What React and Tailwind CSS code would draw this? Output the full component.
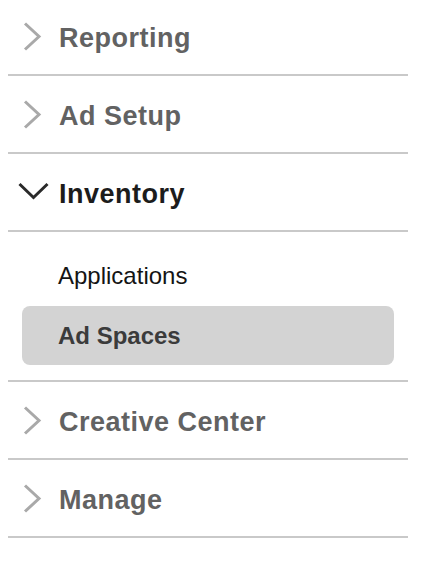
const sections = [
  { label: "Reporting" },
  { label: "Ad Setup" },
  { label: "Inventory", open: true, items: ["Applications", "Ad Spaces"], active: "Ad Spaces" },
  { label: "Creative Center" },
  { label: "Manage" },
];

function ChevronRight() {
  return (
    <svg width="19" height="29" viewBox="0 0 19 29" fill="none">
      <path d="M2 1.5 L16 14.5 L2 27.5" stroke="#a9a9a9" strokeWidth="3" />
    </svg>
  );
}

function ChevronDown() {
  return (
    <svg width="31" height="18" viewBox="0 0 31 18" fill="none">
      <path d="M1.5 2 L15.5 15.5 L29.5 2" stroke="#2a2a2a" strokeWidth="3" />
    </svg>
  );
}

export default function App() {
  return (
    <div className="min-h-screen bg-white font-['Liberation_Sans',Arial,sans-serif]">
      <nav className="ml-[8px] w-[400px] -mt-[2px]">
        {sections.map((s) => (
          <div key={s.label} className="border-b-2 border-[#c9c9c9]">
            <div className="flex h-[76px] items-center">
              <div className={`w-[51px] shrink-0 flex items-center ${s.open ? "pl-[10px] pb-[2px]" : "pl-[15px]"}`}>
                {s.open ? <ChevronDown /> : <ChevronRight />}
              </div>
              <span
                className={`pt-[4px] text-[27px] font-bold leading-none tracking-[0.5px] ${s.open ? "text-[#1c1c1c]" : "text-[#626262]"}`}
              >
                {s.label}
              </span>
            </div>
            {s.open && (
              <div className="border-t-2 border-[#c9c9c9] px-[14px] pt-[14px] pb-[15px] flex flex-col gap-[1px]">
                {s.items.map((item) =>
                  item === s.active ? (
                    <div
                      key={item}
                      className="flex h-[59px] items-center rounded-[8px] bg-[#d3d3d3] pl-[36px] text-[24px] font-bold text-[#3b3b3b]"
                    >
                      {item}
                    </div>
                  ) : (
                    <div key={item} className="flex h-[59px] items-center pl-[36px] text-[24px] text-[#141414]">
                      {item}
                    </div>
                  )
                )}
              </div>
            )}
          </div>
        ))}
      </nav>
    </div>
  );
}
